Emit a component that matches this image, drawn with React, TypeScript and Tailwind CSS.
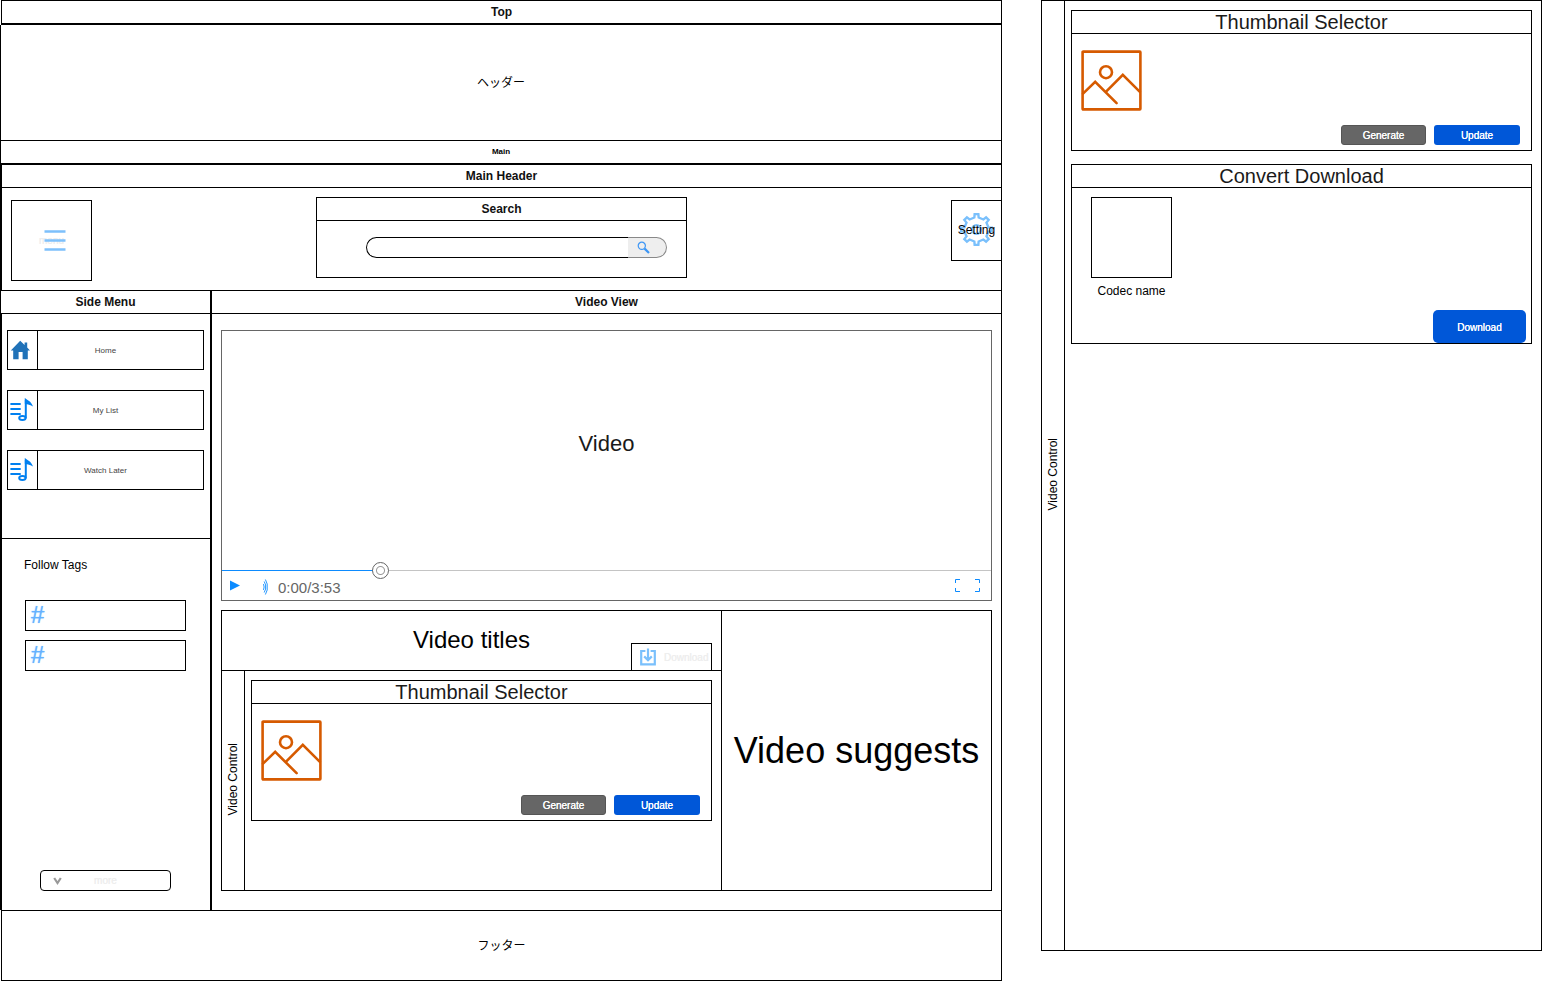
import React from "react";

const HomeIcon = () => (
  <svg width="20" height="20" viewBox="-0.6 0 20 20" fill="#2072b8" aria-hidden="true">
    <path d="M9.6 0.8 L14 5 V2.6 H16.6 V7.4 L19.4 10.4 H17.2 V19.2 H12 V12 H8 V19.2 H2.6 V10.4 H0.2 Z" />
  </svg>
);

const PlaylistIcon = () => (
  <svg width="24" height="24" viewBox="0 0 24 24" fill="none" stroke="#0080f0" strokeWidth="2" aria-hidden="true">
    <path d="M0.4 6 H10.7 M0.4 11 H10.7 M0.4 16 H10.7" />
    <ellipse cx="12.4" cy="20" rx="3.2" ry="2" />
    <path d="M15.8 20.4 V1.8" />
    <path d="M15.8 2 C17 3 19.4 3.5 20.9 6.4 C19 5.6 17.2 5.2 15.8 5 Z" />
  </svg>
);

const MenuIcon = () => (
  <svg width="22" height="21" viewBox="0 0 22 21" stroke="#7dc0fb" strokeWidth="2.4" aria-hidden="true">
    <path d="M0.5 1.5 H21.5 M0.5 10.5 H21.5 M0.5 19.5 H21.5" />
  </svg>
);

const SearchIcon = () => (
  <svg width="13" height="13" viewBox="0 0 13 13" fill="none" stroke="#3d96f5" aria-hidden="true">
    <circle cx="4.8" cy="4.8" r="3.6" strokeWidth="1.2" />
    <path d="M7.6 7.6 L12 12" strokeWidth="2.2" />
  </svg>
);

const GearIcon = () => (
  <svg width="33" height="33" viewBox="0 0 32 32" fill="none" stroke="#7ac0fc" strokeWidth="2.3" aria-hidden="true">
    {/* eight-toothed outline */}
    <path d="M13.9 4.4 L14.2 1 H17.8 L18.1 4.4 L22.7 6.3 L25.3 4.2 L27.8 6.7 L25.7 9.3 L27.6 13.9 L31 14.2 V17.8 L27.6 18.1 L25.7 22.7 L27.8 25.3 L25.3 27.8 L22.7 25.7 L18.1 27.6 L17.8 31 H14.2 L13.9 27.6 L9.3 25.7 L6.7 27.8 L4.2 25.3 L6.3 22.7 L4.4 18.1 L1 17.8 V14.2 L4.4 13.9 L6.3 9.3 L4.2 6.7 L6.7 4.2 L9.3 6.3 Z" />
    <circle cx="16" cy="16" r="4.2" />
  </svg>
);

const DownloadIcon = () => (
  <svg width="16" height="18" viewBox="0 0 16 18" fill="none" stroke="#7ac0fc" strokeWidth="2.2" aria-hidden="true">
    <path d="M5.4 3 H1.2 V16.4 H14.8 V3 H10.6" />
    <path d="M8 0.6 V12 M4.2 8.4 L8 12.2 L11.8 8.4" />
  </svg>
);

const PictureIcon = () => (
  <svg width="61" height="61" viewBox="0 0 61 61" fill="none" stroke="#d65a00" strokeWidth="2.6" aria-hidden="true">
    <rect x="1.6" y="1.6" width="57.8" height="57.8" rx="0.6" />
    <circle cx="25" cy="22.2" r="6" />
    <path d="M2 43.6 L14.2 31.8 L35.6 53.2" strokeLinecap="round" />
    <path d="M24.6 42.2 L41.8 24.8 L59.4 42.4" />
  </svg>
);

const SoundIcon = () => (
  <svg width="6" height="16" viewBox="0 0 6 16" fill="none" stroke="#0c8bff" strokeWidth="0.9" aria-hidden="true">
    <path d="M2.4 0.5 L4.2 5 V11 L2.4 15.5" />
    <path d="M1.2 2.5 L2.6 6 V10 L1.2 13.5" />
    <path d="M0.2 5 L1 7 V9 L0.2 11" />
  </svg>
);

const FullscreenIcon = () => (
  <svg width="25" height="13" viewBox="0 0 25 13" fill="none" stroke="#0c8bff" aria-hidden="true">
    <path d="M5 0.5 H0.5 V4 M20 0.5 H24.5 V4 M5 12.5 H0.5 V9 M20 12.5 H24.5 V9" />
  </svg>
);

const stripTitle = "flex items-center justify-center text-xs font-bold text-[#111]";
const actionText = "text-[10px] text-white [text-shadow:0_0_0_#fff]";

function VideoControlStrip() {
  return (
    <div className="flex w-[23px] shrink-0 items-center justify-center border-r border-black pb-0.5">
      <h2 className="rotate-180 text-xs leading-4 [writing-mode:vertical-rl]">Video Control</h2>
    </div>
  );
}

function Panel({ title, children }: { title: string; children: React.ReactNode }) {
  return (
    <section className="border border-black">
      <h3 className="flex h-[23px] items-center justify-center border-b border-black text-xl leading-5 text-[#1a1a1a]">
        {title}
      </h3>
      {children}
    </section>
  );
}

function ThumbnailSelector() {
  return (
    <Panel title="Thumbnail Selector">
      <div className="flex h-[116px] flex-col justify-between pt-4 pr-[11px] pb-[5px] pl-[9px]">
        <PictureIcon />
        <div className="flex justify-end gap-2">
          <button className={`h-5 w-[85px] rounded-[3px] border border-[#555] bg-[#666] ${actionText}`}>Generate</button>
          <button className={`h-5 w-[86px] rounded-[3px] bg-[#0057d8] ${actionText}`}>Update</button>
        </div>
      </div>
    </Panel>
  );
}

function MenuItem({ icon, label }: { icon: React.ReactNode; label: string }) {
  return (
    <a href="#" className="flex h-10 border border-black">
      <span className="flex w-[30px] items-center border-r border-black pl-0.5">{icon}</span>
      <span className="flex flex-1 items-center justify-center pt-0.5 pr-[30px] text-[8px] text-[#444]">{label}</span>
    </a>
  );
}

function TagButton() {
  return (
    <button className="flex h-[31px] items-center border border-black pb-0.5 pl-[5px] text-2xl leading-6 text-[#66b2ff] [text-shadow:0_0_1px_#66b2ff]">
      #
    </button>
  );
}

function MainHeader() {
  return (
    <header className="border-b border-l-2 border-black">
      <h2 className={`h-[23px] border-b border-black ${stripTitle}`}>Main Header</h2>
      <div className="grid h-[102px] grid-cols-[1fr_371px_1fr] items-start">
        <button className="relative mt-3 ml-[9px] flex size-[81px] items-center justify-center border border-black">
          <span className="text-[10px] text-[#eee] [text-shadow:0_0_0_#eee]">menu</span>
          <span className="absolute left-8">
            <MenuIcon />
          </span>
        </button>
        <section className="mt-[9px] h-[81px] border border-black">
          <h3 className={`h-[23px] border-b border-black ${stripTitle}`}>Search</h3>
          <form className="mt-4 mr-[19px] ml-[49px] flex h-[21px]">
            <input
              type="search"
              aria-label="Search"
              className="min-w-0 flex-1 appearance-none rounded-l-full border-y border-l border-black px-2 text-xs outline-none"
            />
            <button
              type="button"
              aria-label="Run search"
              className="flex w-[39px] items-center rounded-r-full border-y border-r border-[#888] bg-[#eee] pl-[9px]"
            >
              <SearchIcon />
            </button>
          </form>
        </section>
        <button className="relative mt-3 flex h-[61px] w-[50px] items-center justify-center justify-self-end border-y border-l border-black pb-0.5">
          <span className="absolute">
            <GearIcon />
          </span>
          <span className="relative text-xs">Setting</span>
        </button>
      </div>
    </header>
  );
}

function SideMenu() {
  return (
    <aside className="flex w-[212px] shrink-0 flex-col border-r-2 border-black">
      <h2 className={`h-[23px] border-b border-l border-black ${stripTitle}`}>Side Menu</h2>
      <nav className="flex h-[225px] flex-col gap-5 border-b border-l-2 border-black pt-4 pr-1.5 pl-[5px]">
        <MenuItem icon={<HomeIcon />} label="Home" />
        <MenuItem icon={<PlaylistIcon />} label="My List" />
        <MenuItem icon={<PlaylistIcon />} label="Watch Later" />
      </nav>
      <div className="flex flex-1 flex-col border-l-2 border-black pt-[18px] pr-6 pb-[19px] pl-[22px]">
        <h3 className="text-xs">Follow Tags</h3>
        <div className="mt-[27px] ml-px flex flex-col gap-[9px]">
          <TagButton />
          <TagButton />
        </div>
        <button className="relative mr-[15px] ml-4 mt-auto flex h-[21px] items-center justify-center rounded border border-black text-[10px] text-[#eee] [text-shadow:0_0_0_#eee]">
          <svg className="absolute left-3" width="9" height="8" viewBox="0 0 9 8" fill="none" stroke="#999" strokeWidth="2.2" aria-hidden="true">
            <path d="M1.2 1 L4.5 6 L7.8 1" />
          </svg>
          more
        </button>
      </div>
    </aside>
  );
}

function VideoPlayer() {
  return (
    <section className="border border-[#666]">
      <p className="flex h-[231px] items-center justify-center pb-1.5 text-[22px] leading-6 text-[#1a1a1a]">Video</p>
      <input
        type="range"
        min={0}
        max={100}
        defaultValue={20}
        aria-label="Seek"
        className="block h-[17px] w-full appearance-none bg-[linear-gradient(to_right,#0c8bff_20%,#c4c4c4_20%)] bg-[length:100%_1px] bg-center bg-no-repeat [&::-webkit-slider-thumb]:size-[17px] [&::-webkit-slider-thumb]:appearance-none [&::-webkit-slider-thumb]:rounded-full [&::-webkit-slider-thumb]:border [&::-webkit-slider-thumb]:border-[#666] [&::-webkit-slider-thumb]:bg-[radial-gradient(circle,#fff_3px,#999_4px,#fff_5px)]"
      />
      <div className="flex h-[21px] items-start pr-[11px] pl-2">
        <button aria-label="Play" className="mt-px">
          <svg width="10" height="11" viewBox="0 0 10 11" fill="#0c8bff" aria-hidden="true">
            <path d="M0 0.4 L10 5.5 L0 10.6 Z" />
          </svg>
        </button>
        <button aria-label="Volume" className="ml-[23px]">
          <SoundIcon />
        </button>
        <span className="ml-[9px] text-[15px] leading-[18px] text-[#666]">0:00/3:53</span>
        <button aria-label="Fullscreen" className="ml-auto">
          <FullscreenIcon />
        </button>
      </div>
    </section>
  );
}

function VideoDetails() {
  return (
    <section className="mt-[9px] flex h-[281px] border border-black">
      <div className="flex min-w-0 flex-1 flex-col">
        <div className="grid h-[60px] grid-cols-[1fr_auto_1fr] border-b border-black pr-[9px] pl-[9px]">
          <h2 className="col-start-2 self-center pb-0.5 text-2xl leading-6">Video titles</h2>
          <button className="flex h-[27px] w-[81px] items-center gap-2 self-end justify-self-end border-x border-t border-black pl-2 text-[10px] text-[#eee] [text-shadow:0_0_0_#eee]">
            <DownloadIcon />
            Download
          </button>
        </div>
        <div className="flex flex-1">
          <VideoControlStrip />
          <div className="flex-1 pt-[9px] pr-[9px] pl-1.5">
            <ThumbnailSelector />
          </div>
        </div>
      </div>
      <div className="flex w-[270px] shrink-0 items-center justify-center border-l border-black">
        <h2 className="text-4xl whitespace-nowrap">Video suggests</h2>
      </div>
    </section>
  );
}

function DownloadSidebar() {
  return (
    <aside className="flex h-[951px] w-[501px] shrink-0 border border-black">
      <VideoControlStrip />
      <div className="flex flex-1 flex-col gap-[13px] pt-[9px] pr-[9px] pl-1.5">
        <ThumbnailSelector />
        <Panel title="Convert Download">
          <div className="flex h-[155px] justify-between pt-[9px] pr-[5px] pl-[19px]">
            <figure>
              <div className="size-[81px] border border-black" />
              <figcaption className="mt-[5px] text-center text-xs">Codec name</figcaption>
            </figure>
            <button className={`h-[33px] w-[93px] self-end rounded-[5px] bg-[#0057d8] pt-0.5 ${actionText}`}>Download</button>
          </div>
        </Panel>
      </div>
    </aside>
  );
}

export default function App() {
  return (
    <div className="flex items-start gap-[39px] bg-white font-['Liberation_Sans','Noto_Sans_CJK_JP',sans-serif] text-black">
      <div className="min-w-0 flex-1">
        <h1 className={`ml-px h-[25px] border border-b-2 border-black ${stripTitle}`}>Top</h1>
        <div className="flex h-[116px] items-center justify-center border-x border-b border-black text-xs">ヘッダー</div>
        <div className="flex h-6 items-center justify-center border-x border-b-2 border-black text-[8px] font-bold">Main</div>
        <main className="border-r border-black">
          <MainHeader />
          <div className="flex">
            <SideMenu />
            <div className="min-w-0 flex-1">
              <h2 className={`h-[23px] border-b border-black ${stripTitle}`}>Video View</h2>
              <div className="px-[9px] pt-4 pb-[19px]">
                <VideoPlayer />
                <VideoDetails />
              </div>
            </div>
          </div>
        </main>
        <footer className="ml-px flex h-[71px] items-center justify-center border border-black text-xs">フッター</footer>
      </div>
      <DownloadSidebar />
    </div>
  );
}
